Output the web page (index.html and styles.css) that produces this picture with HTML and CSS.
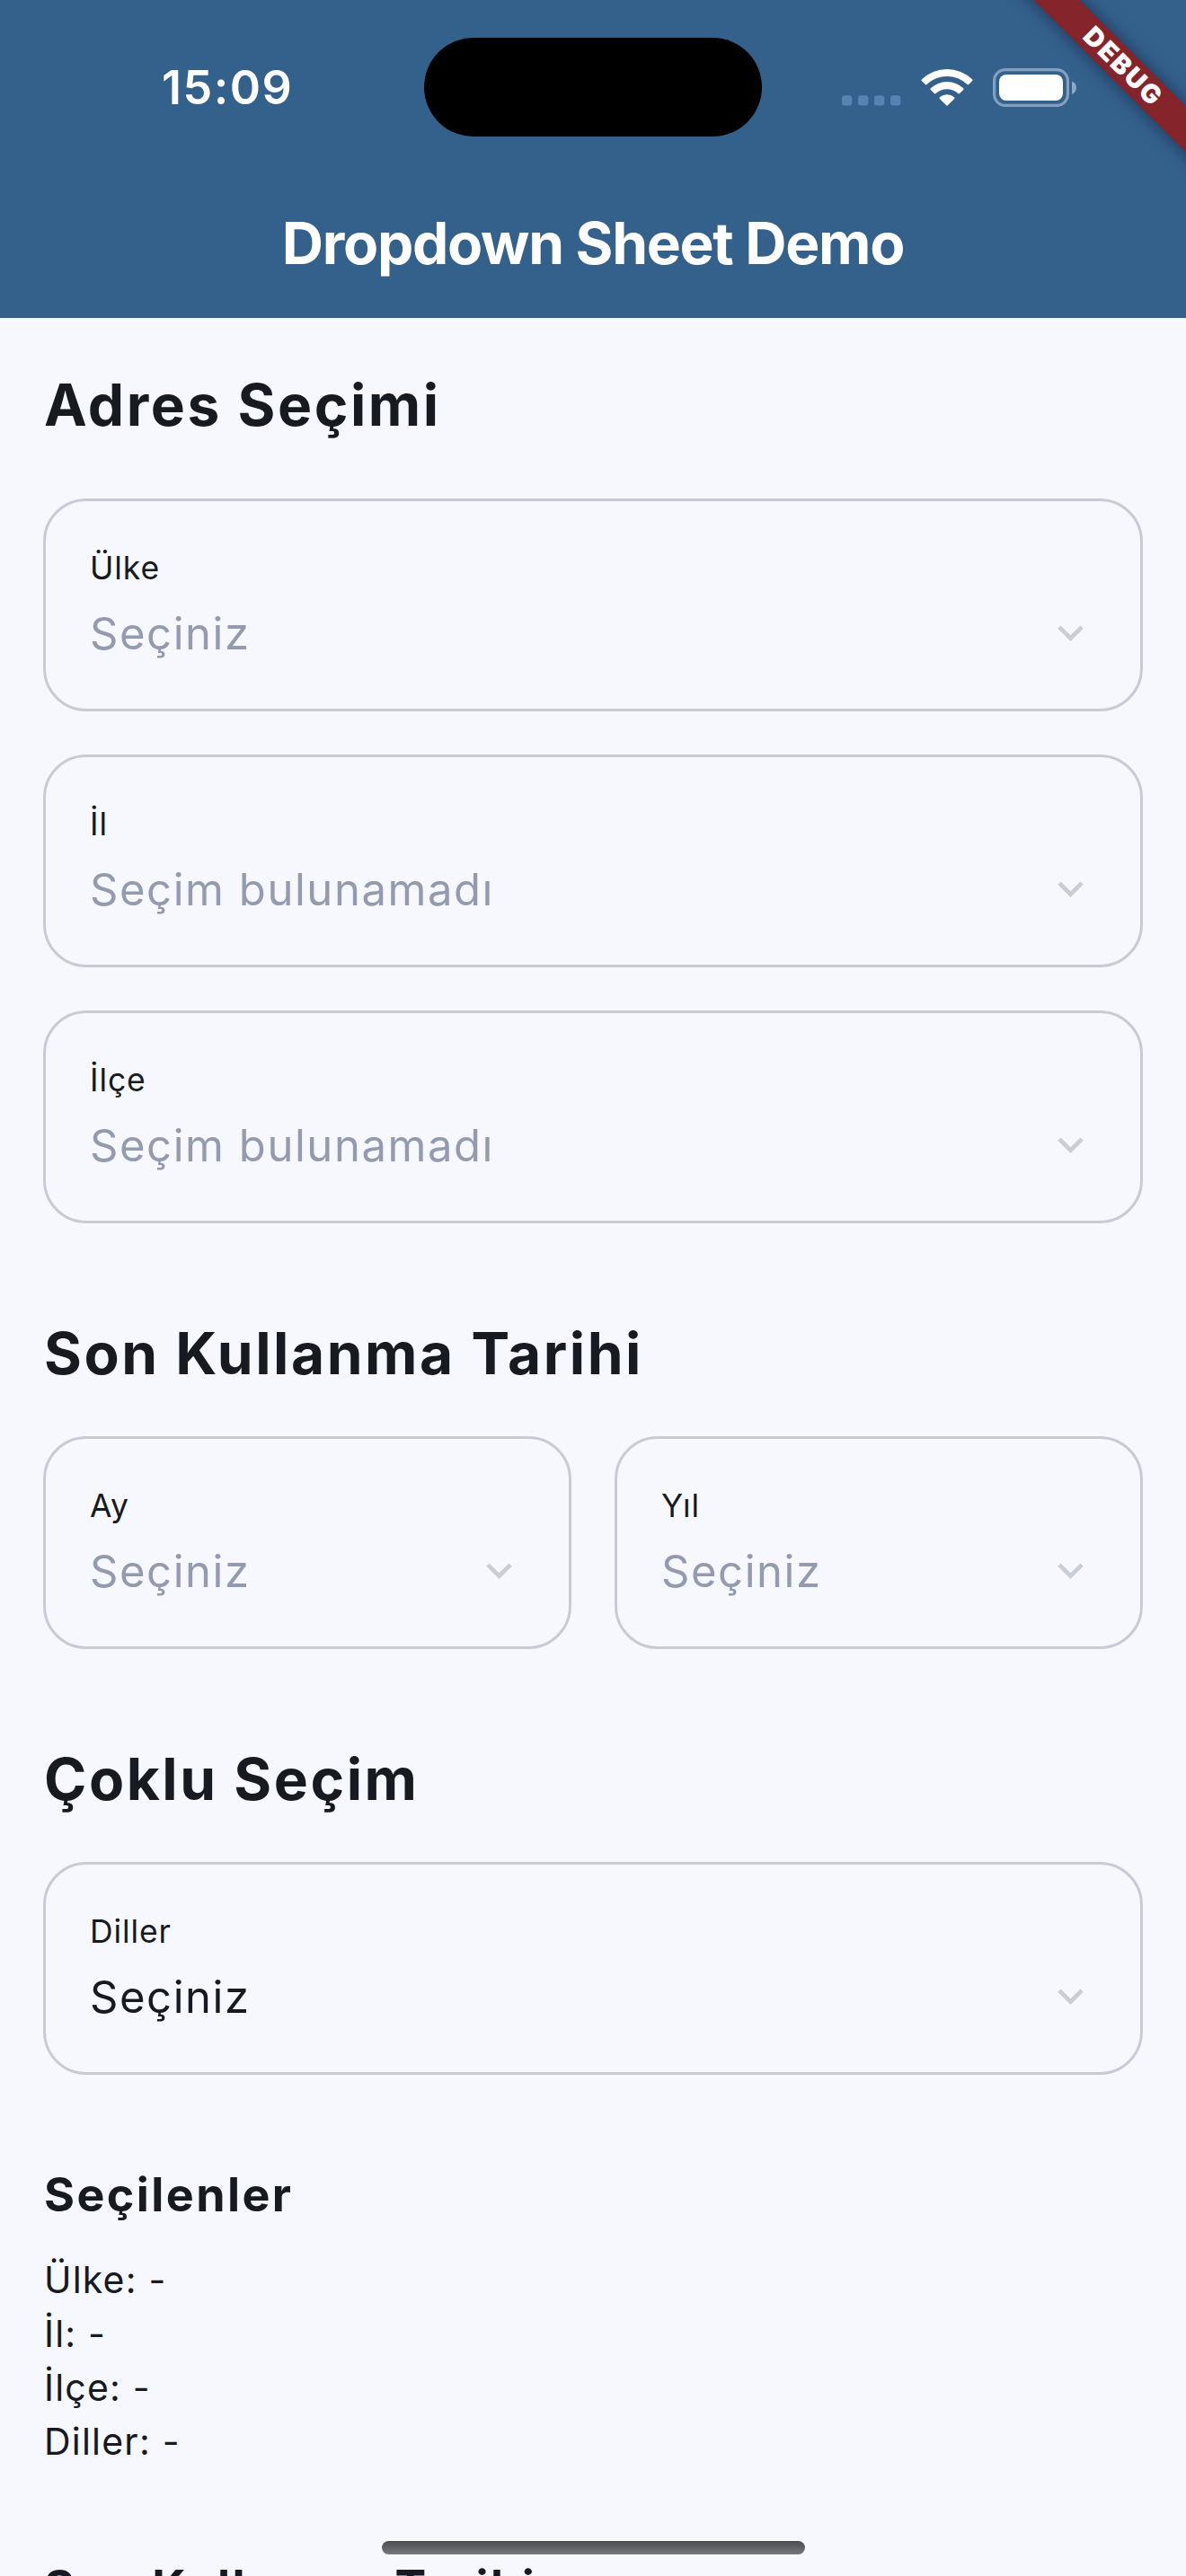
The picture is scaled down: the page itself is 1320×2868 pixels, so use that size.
FILE: index.html
```html
<!DOCTYPE html>
<html lang="tr">
<head>
<meta charset="utf-8">
<title>Dropdown Sheet Demo</title>
<link rel="stylesheet" href="styles.css">
</head>
<body>
<svg width="0" height="0" class="defs">
  <symbol id="chevron" viewBox="0 0 24 24"><path d="M16.59 8.59 12 13.17 7.41 8.59 6 10l6 6 6-6z"/></symbol>
</svg>
<div class="screen">
  <header class="app-bar">
    <div class="status-bar">
      <span class="clock">15:09</span>
      <span class="island"></span>
      <div class="status-icons">
        <svg class="cellular" width="66" height="12" viewBox="0 0 66 12">
          <rect x="0" y="0.2" width="11.3" height="11.3" rx="3"/>
          <rect x="18" y="0.2" width="11.3" height="11.3" rx="3"/>
          <rect x="36" y="0.2" width="11.3" height="11.3" rx="3"/>
          <rect x="54" y="0.2" width="11.3" height="11.3" rx="3"/>
        </svg>
        <svg class="wifi" width="58" height="42" viewBox="0 0 58 42">
          <path d="M0.8 12.4 A40.5 40.5 0 0 1 57.2 12.4 Q58 13.2 57.2 14.1 L53.2 18.1 Q52.4 18.8 51.5 18 A32.5 32.5 0 0 0 6.5 18 Q5.6 18.8 4.8 18.1 L0.8 14.1 Q0 13.2 0.8 12.4 Z"/>
          <path d="M10.8 22.3 A26.5 26.5 0 0 1 47.2 22.3 Q48 23.2 47.2 24.1 L43.1 28.1 Q42.3 28.8 41.4 28 A18.3 18.3 0 0 0 16.6 28 Q15.7 28.8 14.9 28.1 L10.8 24.1 Q10 23.2 10.8 22.3 Z"/>
          <path d="M20.9 32.2 A12.3 12.3 0 0 1 37.1 32.2 Q38 33.1 37.1 34 L29.8 41.3 Q29 42.1 28.2 41.3 L20.9 34 Q20 33.1 20.9 32.2 Z"/>
        </svg>
        <svg class="battery" width="94" height="43" viewBox="0 0 94 43">
          <rect class="battery-shell" x="1.6" y="1.6" width="81.8" height="39.8" rx="12.4"/>
          <rect class="battery-fill" x="7" y="7" width="71" height="29" rx="8"/>
          <path class="battery-cap" d="M88 14.5 Q93 16.5 93 21.7 Q93 27 88 29 Z"/>
        </svg>
      </div>
    </div>
    <h1 class="title">Dropdown Sheet Demo</h1>
  </header>

  <main class="content">
    <section class="section">
      <h2 class="heading heading-loose">Adres Seçimi</h2>
      <div class="fields">
        <div class="field">
          <span class="label">Ülke</span>
          <div class="control"><span class="hint">Seçiniz</span><svg class="chevron"><use href="#chevron"/></svg></div>
        </div>
        <div class="field">
          <span class="label">İl</span>
          <div class="control"><span class="hint">Seçim bulunamadı</span><svg class="chevron"><use href="#chevron"/></svg></div>
        </div>
        <div class="field">
          <span class="label">İlçe</span>
          <div class="control"><span class="hint">Seçim bulunamadı</span><svg class="chevron"><use href="#chevron"/></svg></div>
        </div>
      </div>
    </section>

    <section class="section">
      <h2 class="heading">Son Kullanma Tarihi</h2>
      <div class="fields fields-row">
        <div class="field">
          <span class="label">Ay</span>
          <div class="control"><span class="hint">Seçiniz</span><svg class="chevron"><use href="#chevron"/></svg></div>
        </div>
        <div class="field">
          <span class="label">Yıl</span>
          <div class="control"><span class="hint">Seçiniz</span><svg class="chevron"><use href="#chevron"/></svg></div>
        </div>
      </div>
    </section>

    <section class="section">
      <h2 class="heading">Çoklu Seçim</h2>
      <div class="fields">
        <div class="field">
          <span class="label">Diller</span>
          <div class="control"><span class="value">Seçiniz</span><svg class="chevron"><use href="#chevron"/></svg></div>
        </div>
      </div>
    </section>

    <section class="summary">
      <h3 class="subheading">Seçilenler</h3>
      <p class="line">Ülke: -</p>
      <p class="line">İl: -</p>
      <p class="line">İlçe: -</p>
      <p class="line">Diller: -</p>
    </section>

    <section class="summary">
      <h3 class="subheading">Son Kullanma Tarihi</h3>
    </section>
  </main>

  <div class="debug-corner"><div class="debug-banner">DEBUG</div></div>
  <div class="home-indicator"></div>
</div>
</body>
</html>
```
FILE: styles.css
```css
* {
  box-sizing: border-box;
}

body {
  margin: 0;
  background: #f6f8fd;
  color: #171a20;
  font-family: Inter, "Liberation Sans", sans-serif;
}

h1, h2, h3, p {
  margin: 0;
}

.defs {
  position: absolute;
}

.screen {
  position: relative;
  width: 1320px;
  height: 2868px;
  overflow: hidden;
}

/* App bar */
.app-bar {
  height: 354px;
  padding-top: 42px;
  background: #34608c;
  color: #fff;
}

.status-bar {
  display: grid;
  grid-template-columns: 472px 376px 1fr;
  grid-template-rows: 110px;
  height: 110px;
}

.clock {
  padding-left: 180px;
  font-size: 52px;
  font-weight: 580;
  line-height: 112px;
  letter-spacing: 1.5px;
}

.island {
  border-radius: 55px;
  background: #000;
}

.status-icons {
  display: flex;
  align-items: flex-end;
  height: 76px;
  padding-left: 89px;
}

.cellular {
  fill: rgba(130, 180, 235, 0.42);
}

.wifi {
  margin-left: 22px;
  fill: #fff;
}

.battery {
  margin: 0 0 -1px 22px;
}

.battery-shell {
  fill: none;
  stroke: rgba(225, 235, 255, 0.46);
  stroke-width: 3.2;
}

.battery-fill {
  fill: #fff;
}

.battery-cap {
  fill: rgba(225, 235, 255, 0.5);
}

.title {
  margin-top: 79px;
  font-size: 64px;
  font-weight: 680;
  line-height: 80px;
  letter-spacing: -1.3px;
  text-align: center;
}

/* Form */
.content {
  padding: 55px 48px 0;
}

.section {
  margin-bottom: 103px;
}

.section:nth-of-type(3) {
  margin-bottom: 98px;
}

.heading {
  margin-bottom: 50px;
  padding-left: 1px;
  font-size: 64px;
  font-weight: 680;
  line-height: 84px;
  letter-spacing: 2.55px;
}

.heading-loose {
  margin-bottom: 62px;
}

.fields {
  display: grid;
  gap: 48px;
}

.fields-row {
  grid-template-columns: 1fr 1fr;
}

.field {
  height: 237px;
  padding: 50px 49px 0;
  border: 3px solid #c8cad6;
  border-radius: 48px;
}

.label {
  display: block;
  margin-bottom: 14px;
  font-size: 35.5px;
  line-height: 49px;
  letter-spacing: 0.9px;
}

.control {
  display: flex;
  align-items: center;
  justify-content: space-between;
  margin-top: -1px;
  font-size: 49px;
  font-weight: 370;
  line-height: 71px;
  letter-spacing: 1.55px;
}

.hint {
  color: #949bae;
}

.chevron {
  width: 57px;
  height: 57px;
  margin-top: -2px;
  fill: #cacdd6;
}

/* Selection summary */
.summary {
  margin-bottom: 97px;
}

.subheading {
  margin-bottom: 28px;
  padding-left: 1px;
  font-size: 52px;
  font-weight: 680;
  line-height: 72px;
  letter-spacing: 2.4px;
}

.line {
  padding-left: 1px;
  font-size: 41px;
  line-height: 60px;
  letter-spacing: 1.2px;
}

/* Overlays */
.debug-corner {
  position: absolute;
  top: 0;
  right: 0;
  width: 240px;
  height: 240px;
  overflow: hidden;
}

.debug-banner {
  position: absolute;
  left: 8px;
  top: 54px;
  width: 320px;
  height: 36px;
  padding-left: 6px;
  background: #86242b;
  box-shadow: 0 0 18px rgba(0, 0, 30, 0.5);
  font-size: 29px;
  font-weight: 900;
  line-height: 36px;
  text-align: center;
  letter-spacing: 2px;
  color: #fff;
  transform: rotate(45deg);
}

.home-indicator {
  position: absolute;
  left: 425px;
  bottom: 24px;
  width: 471px;
  height: 15px;
  border-radius: 8px;
  background: linear-gradient(#494b52, #77787f);
}
```
